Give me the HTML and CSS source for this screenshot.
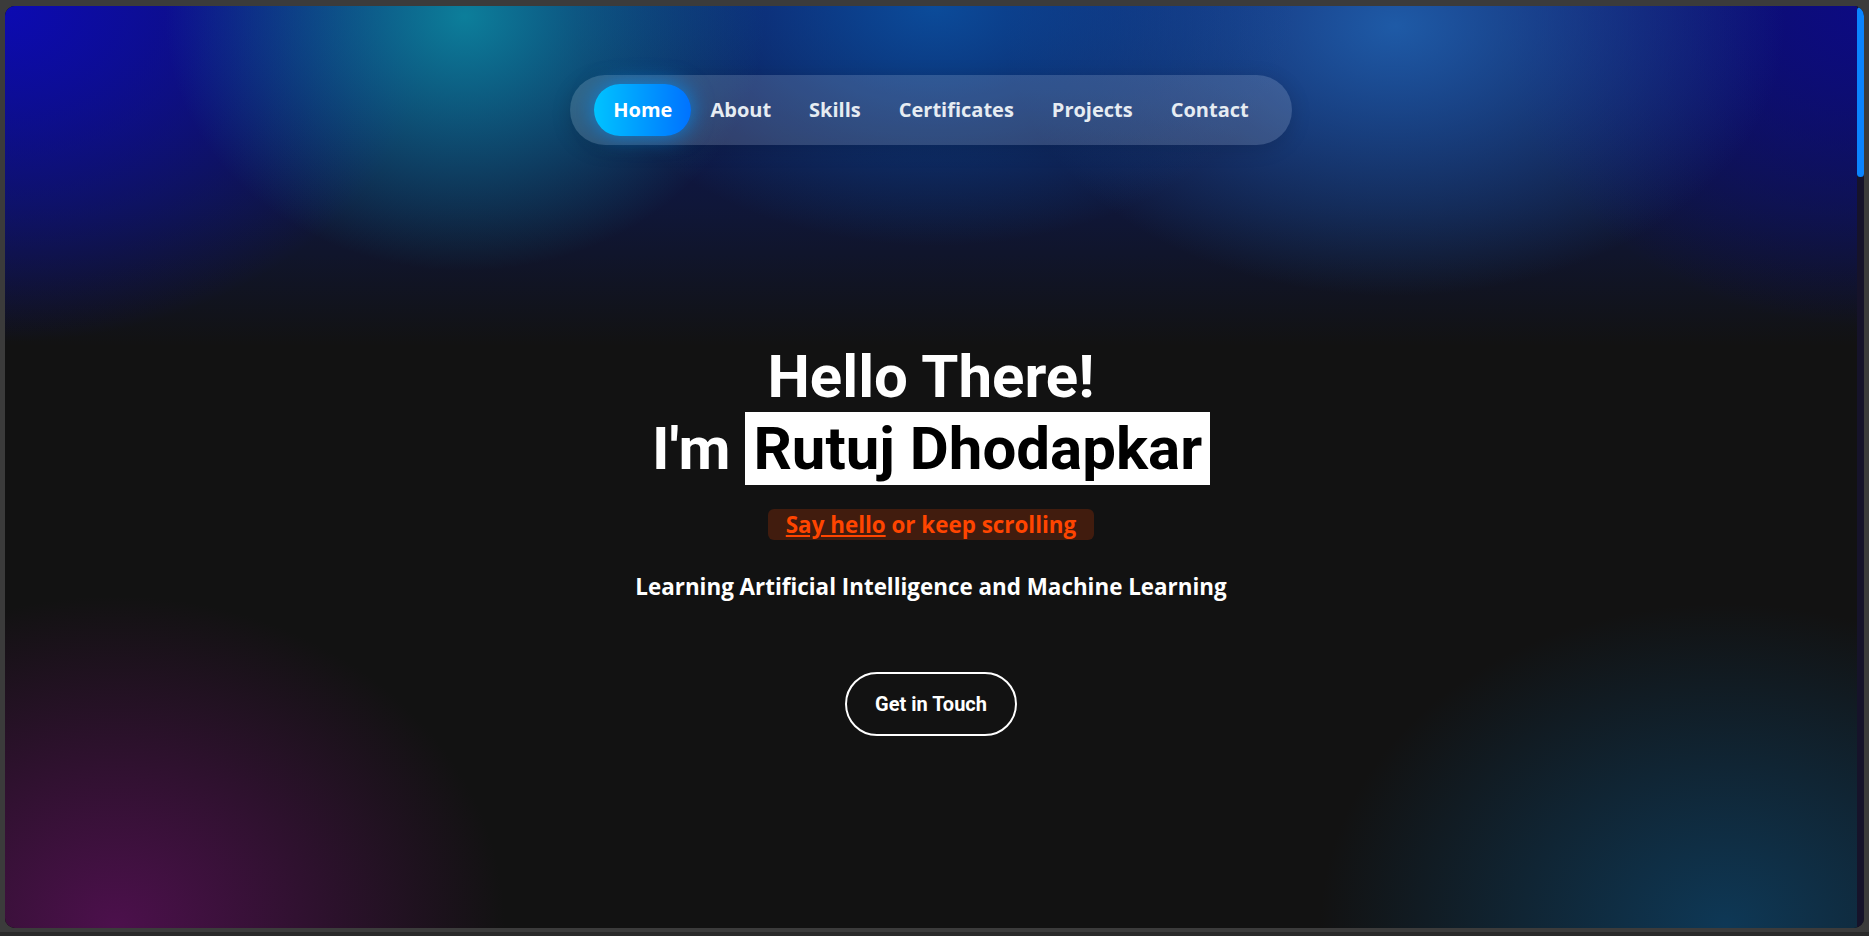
FILE: index.html
```html
<!DOCTYPE html>
<html lang="en">
<head>
<meta charset="utf-8">
<title>Rutuj Dhodapkar</title>
<link rel="stylesheet" href="styles.css">
</head>
<body>
<div class="frame">
  <div class="window">
    <main class="hero">
      <nav class="nav">
        <a class="nav-link active" href="#home">Home</a>
        <a class="nav-link" href="#about">About</a>
        <a class="nav-link" href="#skills">Skills</a>
        <a class="nav-link" href="#certificates">Certificates</a>
        <a class="nav-link" href="#projects">Projects</a>
        <a class="nav-link" href="#contact">Contact</a>
      </nav>
      <section class="intro">
        <h1 class="title">Hello There!<br>I'm <span class="name">Rutuj Dhodapkar</span></h1>
        <p class="badge"><a class="badge-link" href="#contact">Say hello</a> or keep scrolling</p>
        <p class="subtitle">Learning Artificial Intelligence and Machine Learning</p>
        <a class="cta" href="#contact">Get in Touch</a>
      </section>
    </main>
    <div class="scrollbar"><div class="thumb"></div></div>
  </div>
</div>
</body>
</html>
```
FILE: styles.css
```css
* { box-sizing: border-box; }
html, body { margin: 0; padding: 0; }
body {
  background: #3b3b3b;
  height: 936px;
  overflow: hidden;
}
.frame {
  padding: 6px 5px 0 5px;
  height: 936px;
  border-bottom: 4px solid #2a2a2a;
}
.window {
  display: flex;
  height: 922px;
  border-radius: 10px;
  overflow: hidden;
  background: #121212;
}
.hero {
  flex: 1;
  display: flex;
  flex-direction: column;
  align-items: center;
  background:
    radial-gradient(ellipse 400px 340px at 460px 10px, rgba(12,132,158,0.95), rgba(12,132,158,0) 75%),
    radial-gradient(ellipse 480px 320px at 930px 0px, rgba(10,85,165,0.85), rgba(10,85,165,0) 75%),
    radial-gradient(ellipse 520px 360px at 1390px 20px, rgba(32,98,175,0.9), rgba(32,98,175,0) 75%),
    radial-gradient(ellipse 540px 420px at 0px 0px, rgba(12,10,178,1), rgba(12,10,178,0) 80%),
    radial-gradient(ellipse 460px 400px at 1859px 0px, rgba(12,10,130,1), rgba(12,10,130,0) 80%),
    linear-gradient(to bottom, rgba(14,20,95,0.95) 0px, rgba(14,24,70,0.75) 200px, rgba(18,18,18,0) 340px),
    radial-gradient(ellipse 520px 440px at 110px 920px, rgba(76,16,76,1), rgba(76,16,76,0) 75%),
    radial-gradient(ellipse 540px 430px at 1720px 920px, rgba(14,56,86,1), rgba(14,56,86,0) 75%),
    #121212;
}
.nav {
  margin-top: 69px;
  display: flex;
  align-items: center;
  padding: 9px 24px;
  border-radius: 36px;
  background: rgba(255,255,255,0.15);
  box-shadow: 0 4px 20px rgba(0,0,0,0.15);
}
.nav-link {
  font-family: "Open Sans", "Liberation Sans", sans-serif;
  font-weight: 700;
  font-size: 20px;
  line-height: 28px;
  color: #e6ecf2;
  text-decoration: none;
  padding: 12px 19px;
  border-radius: 26px;
}
.nav-link.active {
  color: #ffffff;
  background: linear-gradient(90deg, #00c3ff, #0072ff);
  box-shadow: 0 0 22px rgba(0,150,255,0.75);
}
.intro {
  display: flex;
  flex-direction: column;
  align-items: center;
  margin-top: 196px;
}
.title {
  margin: 0;
  font-family: Roboto, "Liberation Sans", sans-serif;
  font-weight: 700;
  font-size: 60px;
  line-height: 72px;
  color: #ffffff;
  text-align: center;
}
.name {
  background: #ffffff;
  color: #000000;
  padding: 1px 8px;
}
.badge {
  margin: 24px 0 0;
  padding: 0 18px;
  border-radius: 6px;
  background: rgba(255,69,0,0.2);
  color: #ff4500;
  font-family: "Open Sans", "Liberation Sans", sans-serif;
  font-weight: 700;
  font-size: 22.4px;
  line-height: 31px;
}
.badge-link {
  color: #ff4500;
  text-decoration: underline;
}
.subtitle {
  margin: 31px 0 0;
  font-family: "Open Sans", "Liberation Sans", sans-serif;
  font-weight: 700;
  font-size: 22.4px;
  line-height: 32px;
  color: #ffffff;
}
.cta {
  margin-top: 69px;
  display: inline-block;
  padding: 0 28px;
  height: 64px;
  line-height: 60px;
  border: 2px solid #ffffff;
  border-radius: 32px;
  color: #ffffff;
  text-decoration: none;
  font-family: Roboto, "Liberation Sans", sans-serif;
  font-weight: 700;
  font-size: 20px;
}
.scrollbar {
  width: 7px;
  flex: none;
  background: #16132a;
}
.thumb {
  height: 170px;
  margin-top: 1px;
  border-radius: 4px;
  background: #0a84ff;
}
```
